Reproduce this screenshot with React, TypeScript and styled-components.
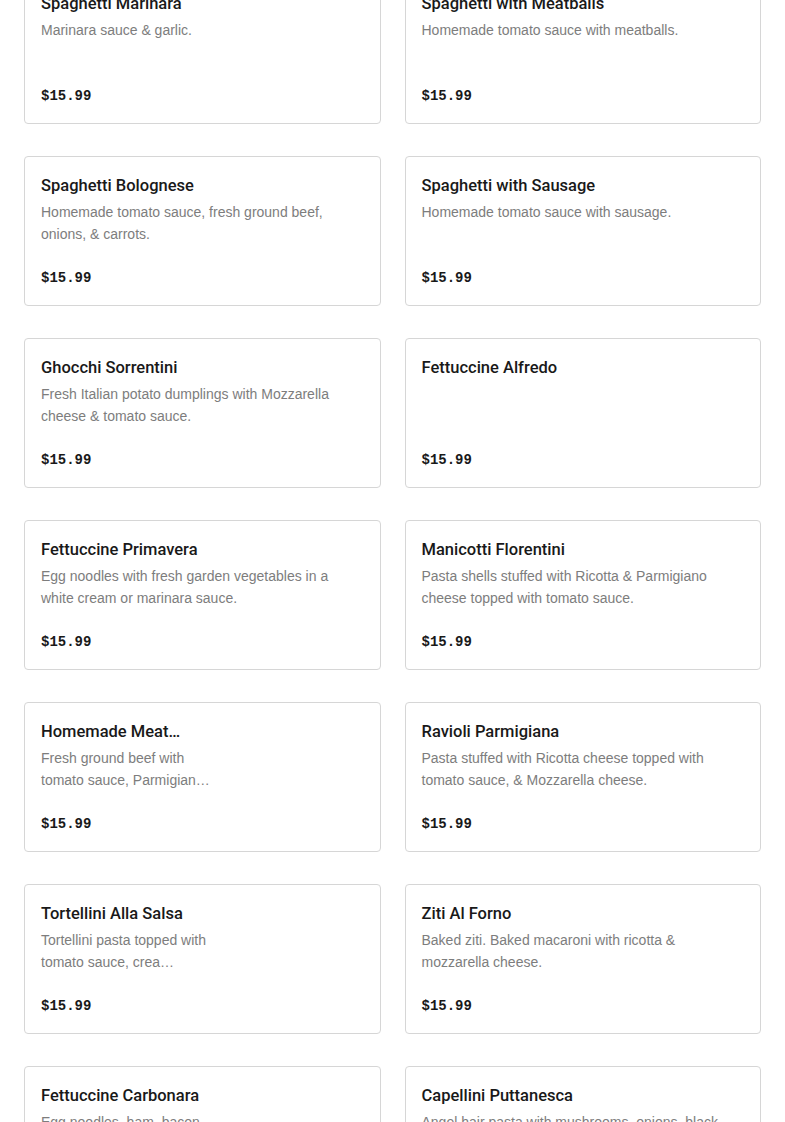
import styled, { createGlobalStyle } from 'styled-components';

const GlobalStyle = createGlobalStyle`
  html, body {
    margin: 0;
    padding: 0;
    background: #ffffff;
    overflow: hidden;
  }
  body {
    font-family: "Liberation Sans", Arial, sans-serif;
    -webkit-font-smoothing: antialiased;
  }
`;

type Dish = {
  name: string;
  description: string;
  price: string;
  narrow?: boolean;
};

const dishes: Dish[] = [
  { name: 'Spaghetti Marinara', description: 'Marinara sauce & garlic.', price: '$15.99' },
  { name: 'Spaghetti with Meatballs', description: 'Homemade tomato sauce with meatballs.', price: '$15.99' },
  { name: 'Spaghetti Bolognese', description: 'Homemade tomato sauce, fresh ground beef, onions, & carrots.', price: '$15.99' },
  { name: 'Spaghetti with Sausage', description: 'Homemade tomato sauce with sausage.', price: '$15.99' },
  { name: 'Ghocchi Sorrentini', description: 'Fresh Italian potato dumplings with Mozzarella cheese & tomato sauce.', price: '$15.99' },
  { name: 'Fettuccine Alfredo', description: '', price: '$15.99' },
  { name: 'Fettuccine Primavera', description: 'Egg noodles with fresh garden vegetables in a white cream or marinara sauce.', price: '$15.99' },
  { name: 'Manicotti Florentini', description: 'Pasta shells stuffed with Ricotta & Parmigiano cheese topped with tomato sauce.', price: '$15.99' },
  { name: 'Homemade Meat…', description: 'Fresh ground beef with tomato sauce, Parmigian…', price: '$15.99', narrow: true },
  { name: 'Ravioli Parmigiana', description: 'Pasta stuffed with Ricotta cheese topped with tomato sauce, & Mozzarella cheese.', price: '$15.99' },
  { name: 'Tortellini Alla Salsa', description: 'Tortellini pasta topped with tomato sauce, crea…', price: '$15.99', narrow: true },
  { name: 'Ziti Al Forno', description: 'Baked ziti. Baked macaroni with ricotta & mozzarella cheese.', price: '$15.99' },
  { name: 'Fettuccine Carbonara', description: 'Egg noodles, ham, bacon…', price: '$15.99', narrow: true },
  { name: 'Capellini Puttanesca', description: 'Angel hair pasta with mushrooms, onions, black olives & capers.', price: '$15.99' },
];

const Page = styled.main`
  padding: 0 24px;
  margin-top: -26px;
`;

const Grid = styled.div`
  display: grid;
  grid-template-columns: 1fr 1fr;
  column-gap: 24px;
  row-gap: 32px;
`;

const Card = styled.article`
  box-sizing: border-box;
  height: 150px;
  display: flex;
  flex-direction: column;
  padding: 17px 16px 15px;
  border: 1px solid #d6d6d6;
  border-radius: 4px;
  background: #ffffff;
`;

const Title = styled.h3<{ $narrow?: boolean }>`
  margin: 0;
  font-family: Roboto, "Liberation Sans", Arial, sans-serif;
  font-size: 16.5px;
  line-height: 24px;
  font-weight: 500;
  color: #191919;
  max-width: ${p => (p.$narrow ? '175px' : 'none')};
`;

const Description = styled.p<{ $narrow?: boolean }>`
  margin: 3px 0 0;
  font-size: 14px;
  line-height: 22px;
  color: #7d7d7d;
  max-width: ${p => (p.$narrow ? '180px' : 'none')};
`;

const Price = styled.span`
  margin-top: auto;
  font-family: "Liberation Mono", "Courier New", monospace;
  font-size: 14px;
  line-height: 24px;
  font-weight: 700;
  color: #191919;
`;

export default function App() {
  return (
    <>
      <GlobalStyle />
      <Page>
        <Grid>
          {dishes.map(d => (
            <Card key={d.name}>
              <Title $narrow={d.narrow}>{d.name}</Title>
              {d.description && <Description $narrow={d.narrow}>{d.description}</Description>}
              <Price>{d.price}</Price>
            </Card>
          ))}
        </Grid>
      </Page>
    </>
  );
}
